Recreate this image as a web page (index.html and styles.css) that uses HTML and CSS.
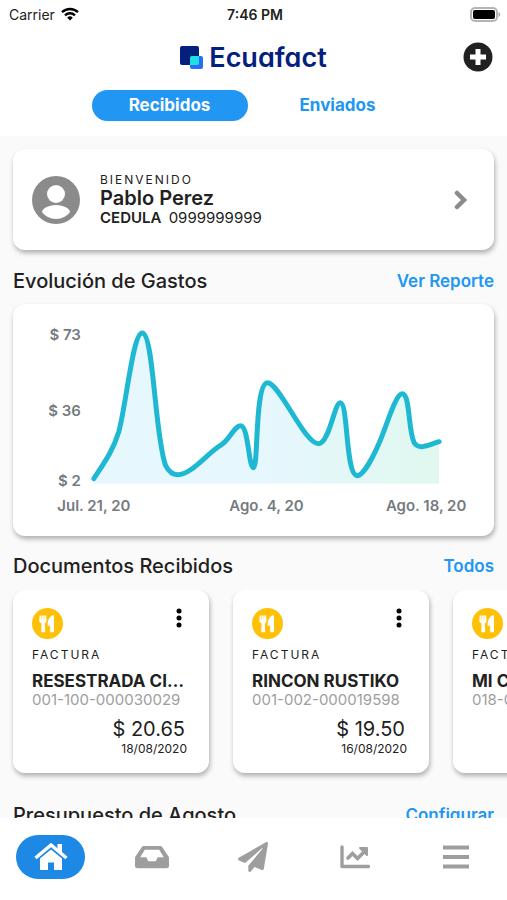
FILE: index.html
```html
<!doctype html>
<html lang="es">
    <head>
        <meta charset="utf-8">
        <meta name="viewport" content="width=device-width, initial-scale=1">
        <title>Ecuafact</title>
        <link rel="stylesheet" href="styles.css">
    </head>
    <body>
        <svg class="sprite" aria-hidden="true">
            <symbol id="utensils" viewBox="0 0 31 31">
                <circle cx="15.500" cy="15.500" r="15.500" fill="#ffc107"/>
                <path fill="#fff" d="M7.600 7.500h1.400v4h.5v-4h2.200v4h.5v-4h1.900l.4 5.200c0 1.500-.7 2.300-1.700 2.800l.4 7.800c0 .6-.4 1-1 1h-2c-.6 0-1-.4-1-1l.4-7.800c-1.200-.5-2.300-1.300-2.300-2.800zM22 8v15.300c0 .6-.4 1-1 1h-1.800c-.6 0-1-.4-1-1v-5.600h-2.500c-.3-4.500 1.200-9.300 5.500-10.500.5-.1.800.3.800.8z"/>
            </symbol>
            <symbol id="dots" viewBox="0 0 6 20">
                <circle cx="3" cy="3" r="2.500"/>
                <circle cx="3" cy="10" r="2.500"/>
                <circle cx="3" cy="17" r="2.500"/>
            </symbol>
        </svg>

        <div class="status">
            <div class="carrier">
                Carrier
                <svg width="18" height="14" viewBox="0 0 18 14" aria-hidden="true">
                    <path d="M1 5.200a11.500 11.500 0 0 1 16 0M4 8.300a7.200 7.200 0 0 1 10 0" fill="none" stroke="#000" stroke-width="2.400"/>
                    <path d="M9 13.500 6.200 10.700a4 4 0 0 1 5.600 0z"/>
                </svg>
            </div>
            <time class="clock">7:46 PM</time>
            <svg class="battery" width="31" height="15" viewBox="0 0 31 15" aria-hidden="true">
                <rect x="1" y="1" width="26" height="13" rx="4" fill="#fff" stroke="#b4b4b4" stroke-width="2"/>
                <rect x="3" y="3" width="22" height="9" rx="2" fill="#000"/>
                <path d="M28.500 5c2.300.7 2.300 4.300 0 5z" fill="#a8a8a8"/>
            </svg>
        </div>

        <header>
            <h1 class="logo">
                <svg width="23" height="23" viewBox="0 0 23 23" aria-hidden="true">
                    <rect width="19" height="19" rx="2" fill="#04207c"/>
                    <rect x="10" y="10" width="13" height="13" rx="2" fill="#2b6cf6"/>
                    <path d="M10 12a2 2 0 0 1 2-2h7v7a2 2 0 0 1-2 2h-7z" fill="#1ee0e0"/>
                </svg>
                Ecuafact
            </h1>
            <button class="add" aria-label="Agregar">
                <svg width="30" height="30" viewBox="0 0 30 30" aria-hidden="true">
                    <circle cx="15" cy="15" r="14.500" fill="#212121"/>
                    <path d="M15 7v16M7 15h16" stroke="#fff" stroke-width="5"/>
                </svg>
            </button>
        </header>

        <div class="tabs">
            <button class="tab active">Recibidos</button>
            <button class="tab">Enviados</button>
        </div>

        <main>
            <a class="card profile" href="#perfil">
                <svg width="48" height="48" viewBox="0 0 48 48" aria-hidden="true">
                    <circle cx="24" cy="24" r="24" fill="#8b8b8b"/>
                    <circle cx="24" cy="18" r="9" fill="#fff"/>
                    <path d="M10 36c0-4 8-7 14-7s14 3 14 7c-3 4-8 7-14 7s-11-3-14-7z" fill="#fff"/>
                </svg>
                <div class="who">
                    <div class="label">BIENVENIDO</div>
                    <div class="user">Pablo Perez</div>
                    <div class="ident"><b>CEDULA</b> 0999999999</div>
                </div>
                <svg width="14" height="20" viewBox="0 0 14 20" aria-hidden="true">
                    <path d="M3 3l7 7-7 7" fill="none" stroke="#8b8b8b" stroke-width="4.500" stroke-linecap="round"/>
                </svg>
            </a>

            <div class="heading">
                <h2>Evolución de Gastos</h2>
                <a href="#reporte">Ver Reporte</a>
            </div>
            <section class="card">
                <svg class="chart" viewBox="0 0 482 232" role="img" aria-label="Evolución de Gastos">
                    <defs>
                        <linearGradient id="fill">
                            <stop offset="0" stop-color="#e6f7fe"/>
                            <stop offset=".5" stop-color="#e6f7fd"/>
                            <stop offset="1" stop-color="#e0f8ef"/>
                        </linearGradient>
                    </defs>
                    <path class="area" fill="url(#fill)" d="M81 175C90 161 100 148 106 128C114 98 120 29 129.500 29C141 29 142 133 153 162C156 168 160 171 165 171C179 171 194 150 209 141C217 136 222 122 228 122C236 122 236 164 241 164C246 164 242 79 255 79C267 79 292 140 306 140C317 140 322 99 328 99C336 99 333 172 345 172C351 172 361 153 367 139C374 124 383 90 390 90C398 90 396 128 402 139C407 147 417 141 427 138V180H81z"/>
                    <path class="line" d="M81 175C90 161 100 148 106 128C114 98 120 29 129.500 29C141 29 142 133 153 162C156 168 160 171 165 171C179 171 194 150 209 141C217 136 222 122 228 122C236 122 236 164 241 164C246 164 242 79 255 79C267 79 292 140 306 140C317 140 322 99 328 99C336 99 333 172 345 172C351 172 361 153 367 139C374 124 383 90 390 90C398 90 396 128 402 139C407 147 417 141 427 138"/>
                    <g text-anchor="end">
                        <text x="68" y="36">$ 73</text>
                        <text x="68" y="112">$ 36</text>
                        <text x="68" y="182">$ 2</text>
                    </g>
                    <g text-anchor="middle">
                        <text x="81" y="207">Jul. 21, 20</text>
                        <text x="254" y="207">Ago. 4, 20</text>
                        <text x="414" y="207">Ago. 18, 20</text>
                    </g>
                </svg>
            </section>

            <div class="heading">
                <h2>Documentos Recibidos</h2>
                <a href="#documentos">Todos</a>
            </div>
            <div class="docs">
                <article class="card doc">
                    <div class="top">
                        <svg width="31" height="31" aria-hidden="true"><use href="#utensils"/></svg>
                        <button aria-label="Opciones"><svg width="6" height="20" aria-hidden="true"><use href="#dots"/></svg></button>
                    </div>
                    <div class="label">FACTURA</div>
                    <h3>RESESTRADA CIA LTDA</h3>
                    <div class="number">001-100-000030029</div>
                    <div class="amount">$ 20.65</div>
                    <time>18/08/2020</time>
                </article>
                <article class="card doc">
                    <div class="top">
                        <svg width="31" height="31" aria-hidden="true"><use href="#utensils"/></svg>
                        <button aria-label="Opciones"><svg width="6" height="20" aria-hidden="true"><use href="#dots"/></svg></button>
                    </div>
                    <div class="label">FACTURA</div>
                    <h3>RINCON RUSTIKO</h3>
                    <div class="number">001-002-000019598</div>
                    <div class="amount">$ 19.50</div>
                    <time>16/08/2020</time>
                </article>
                <article class="card doc">
                    <div class="top">
                        <svg width="31" height="31" aria-hidden="true"><use href="#utensils"/></svg>
                        <button aria-label="Opciones"><svg width="6" height="20" aria-hidden="true"><use href="#dots"/></svg></button>
                    </div>
                    <div class="label">FACTURA</div>
                    <h3>MI COMISARIATO</h3>
                    <div class="number">018-001-000012345</div>
                    <div class="amount">$ 12.30</div>
                    <time>15/08/2020</time>
                </article>
            </div>

            <div class="heading">
                <h2>Presupuesto de Agosto</h2>
                <a href="#configurar">Configurar</a>
            </div>
        </main>

        <nav>
            <a class="active" href="#inicio" aria-label="Inicio">
                <svg width="34" height="28" viewBox="0 0 34 28" aria-hidden="true">
                    <path d="M1.500 15 17 2l15.500 13" fill="none" stroke="currentColor" stroke-width="3.400"/>
                    <path d="M23.500 1H28v10l-4.500-4zM17 6.500 28 15.500V27h-8v-7.500h-6V27H6V15.500z" fill="currentColor"/>
                </svg>
            </a>
            <a href="#bandeja" aria-label="Bandeja">
                <svg width="34" height="24" viewBox="0 0 34 24" aria-hidden="true">
                    <path fill="currentColor" fill-rule="evenodd" d="M8.700 1h16.600c.8 0 1.500.4 1.900 1l6.300 9.500c.3.400.5.900.5 1.400V21c0 1.300-1 2.300-2.300 2.300H2.300C1 23.300 0 22.300 0 21v-8.100c0-.5.200-1 .5-1.400L6.800 2c.4-.6 1.100-1 1.900-1zM9.800 4.800 5.200 12.300h6.100l2 4h7.400l2-4h6.100l-4.600-7.500z"/>
                </svg>
            </a>
            <a href="#enviar" aria-label="Enviar">
                <svg width="30" height="30" viewBox="0 0 512 512" aria-hidden="true">
                    <path fill="currentColor" d="M476 3.200 12.500 270.600c-18.100 10.400-15.800 35.600 2.200 43.200L121 358.400l287.300-253.200c5.500-4.900 13.300 2.600 8.600 8.300L176 407v80.500c0 23.600 28.500 32.900 42.500 15.800L282 426l124.600 52.200c14.200 6 30.400-2.900 33-18.200l72-432C515 7.800 493.300-6.800 476 3.200z"/>
                </svg>
            </a>
            <a href="#estadisticas" aria-label="Estadísticas">
                <svg width="30" height="24" viewBox="0 0 30 24" fill="none" stroke="currentColor" aria-hidden="true">
                    <path d="M2 2v19.500h26.500" stroke-width="3.400" stroke-linecap="round" stroke-linejoin="round"/>
                    <path d="M8 13l4.500-4.500 5 5L24 7" stroke-width="3.600" stroke-linecap="round"/>
                    <path d="M20 3h7v7z" fill="currentColor" stroke-width="2" stroke-linejoin="round"/>
                </svg>
            </a>
            <a href="#menu" aria-label="Menú">
                <svg width="28" height="24" viewBox="0 0 28 24" aria-hidden="true">
                    <path d="M1 2.500h26M1 12h26M1 21.500h26" stroke="currentColor" stroke-width="4"/>
                </svg>
            </a>
        </nav>
    </body>
</html>
```
FILE: styles.css
```css
* {
    box-sizing: border-box;
}
body {
    margin: 0;
    height: 100vh;
    display: flex;
    flex-direction: column;
    font-family: Inter, "Liberation Sans", sans-serif;
    color: #212121;
    background: white;
}
h1, h2, h3 {
    margin: 0;
}
a {
    color: #2196f3;
    text-decoration: none;
}
button {
    border: 0;
    padding: 0;
    background: none;
    font: inherit;
    color: inherit;
}
svg {
    display: block;
}
.sprite {
    display: none;
}

/* top bar */
.status {
    display: grid;
    grid-template-columns: 1fr auto 1fr;
    align-items: center;
    height: 28px;
    padding: 0 6px 0 9px;
    font-size: 14px;
}
.carrier {
    display: flex;
    align-items: center;
    gap: 6px;
}
.clock {
    font-weight: 600;
}
.battery {
    justify-self: end;
}
header {
    display: grid;
    grid-template-columns: 1fr auto 1fr;
    align-items: center;
    height: 58px;
    padding: 0 14px;
}
.logo {
    grid-column: 2;
    display: flex;
    align-items: center;
    gap: 6px;
    color: #04207c;
    font-size: 27px;
    font-weight: 600;
    font-feature-settings: "cv11";
}
.add {
    justify-self: end;
}
.tabs {
    display: flex;
    justify-content: center;
    gap: 12px;
    padding: 4px 13px 15px;
}
.tab {
    width: 156px;
    height: 31px;
    padding-bottom: 2px;
    border-radius: 16px;
    font-size: 17px;
    font-weight: 700;
    color: #2196f3;
}
.tab.active {
    background: #2196f3;
    color: white;
}

main {
    flex: 1;
    min-height: 0;
    overflow: auto;
    scrollbar-width: none;
    padding: 13px 13px 0;
    background: #fafafa;
}
.card {
    display: block;
    background: white;
    border-radius: 12px;
    box-shadow: 1px 3px 5px rgba(0, 0, 0, 0.3);
}
.label {
    font-size: 12px;
    line-height: 16px;
    letter-spacing: 2px;
}
.heading {
    display: flex;
    justify-content: space-between;
    align-items: center;
    height: 54px;
    padding-top: 7px;
}
.heading h2 {
    font-size: 20px;
    font-weight: 500;
}
.heading a {
    font-size: 17px;
    font-weight: 600;
}

.profile {
    display: flex;
    align-items: center;
    gap: 20px;
    height: 101px;
    padding: 0 26px 0 19px;
    color: #212121;
}
.who {
    flex: 1;
}
.user {
    font-size: 20px;
    line-height: 20px;
    font-weight: 600;
}
.ident {
    font-size: 15px;
    line-height: 20px;
}
.ident b {
    font-weight: 600;
    margin-right: 3px;
}

.chart {
    width: 100%;
}
.chart text {
    font-size: 15px;
    font-weight: 600;
    fill: #757b80;
}
.line {
    fill: none;
    stroke: #1fb8d3;
    stroke-width: 5;
    stroke-linecap: round;
}

.docs {
    display: flex;
    gap: 24px;
    margin: 0 -13px;
    padding: 0 13px 12px;
    overflow: auto;
    scrollbar-width: none;
}
.doc {
    flex: none;
    width: 196px;
    padding: 18px 20px 16px 19px;
}
.doc .top {
    display: flex;
    justify-content: space-between;
    align-items: flex-start;
    padding-right: 7px;
    margin-bottom: 8px;
}
.doc h3 {
    margin-top: 8px;
    font-size: 17px;
    line-height: 20px;
    font-weight: 700;
    white-space: nowrap;
    overflow: hidden;
    text-overflow: ellipsis;
}
.number {
    font-size: 15px;
    line-height: 18px;
    color: #9e9e9e;
}
.amount {
    margin-top: 9px;
    padding-right: 4px;
    font-size: 20px;
    line-height: 22px;
    text-align: right;
}
.doc time {
    display: block;
    padding-right: 2px;
    font-size: 12px;
    line-height: 17px;
    text-align: right;
}

nav {
    display: grid;
    grid-template-columns: repeat(5, 1fr);
    justify-items: center;
    height: 82px;
    padding-top: 17px;
    background: white;
}
nav a {
    display: flex;
    align-items: center;
    justify-content: center;
    width: 69px;
    height: 44px;
    border-radius: 22px;
    color: #9e9e9e;
}
nav a.active {
    background: #1e88e5;
    color: white;
}
```
